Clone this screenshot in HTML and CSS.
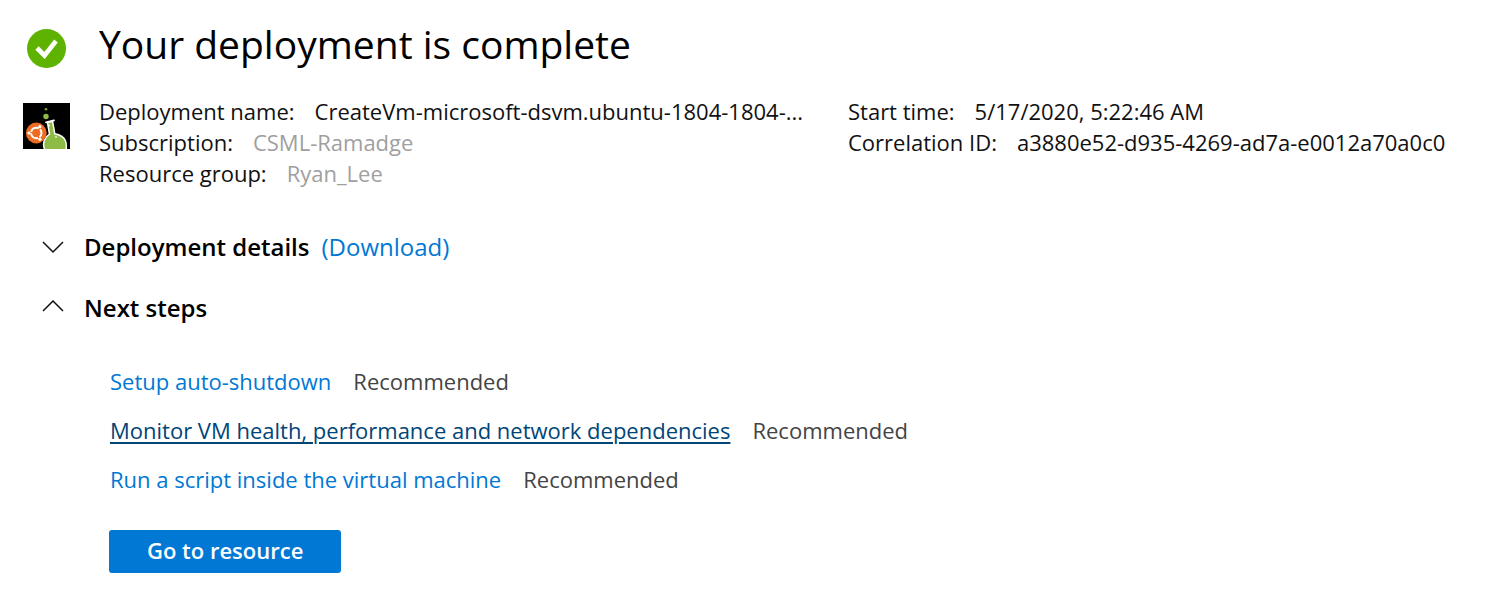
FILE: index.html
```html
<!DOCTYPE html>
<html lang="en">
<head>
<meta charset="utf-8">
<title>Deployment</title>
<link rel="stylesheet" href="styles.css">
</head>
<body>
<main class="page">
  <header class="heading">
    <svg class="status-icon" viewBox="0 0 39 39" aria-hidden="true"><circle cx="19.500" cy="19.500" r="19.500" fill="#5db300"/><path d="M10 19l7.500 7.500L29 12" fill="none" stroke="#fff" stroke-width="4.600"/></svg>
    <h1 class="title">Your deployment is complete</h1>
  </header>
  <section class="summary">
    <svg class="product-icon" viewBox="0 0 47 46" aria-hidden="true">
      <rect width="47" height="46" fill="#000"/>
      <path d="M24.500 19.500l5-1.300 2.300 12.600q8.500 1.500 10.700 7.200 1.400 4 .5 9H22q-2.500-5-.5-10 1.500-3.500 5-6z" fill="#8dbb45" stroke="#fff" stroke-width="1.500"/>
      <path d="M23 19.300l8-2" stroke="#fff" stroke-width="1.800" stroke-linecap="round"/>
      <circle cx="26" cy="22.500" r="1" fill="#fff"/><circle cx="33" cy="34" r="1" fill="#e9f1dc"/>
      <circle cx="13.300" cy="30" r="10.400" fill="#ee6b23"/>
      <circle cx="13.300" cy="30" r="5.200" fill="none" stroke="#fff" stroke-width="2" stroke-dasharray="9.400 1.500" stroke-dashoffset="4.700"/>
      <circle cx="6" cy="30" r="1.600" fill="#fff"/><circle cx="16.900" cy="23.700" r="1.600" fill="#fff"/><circle cx="16.900" cy="36.300" r="1.600" fill="#fff"/>
      <circle cx="23" cy="13.500" r="2.700" fill="#8dbb45"/><circle cx="23" cy="6.300" r="1.300" fill="#7da33d"/>
    </svg>
    <dl class="facts facts-main">
      <div class="fact"><dt>Deployment name:</dt><dd>CreateVm-microsoft-dsvm.ubuntu-1804-1804-...</dd></div>
      <div class="fact"><dt>Subscription:</dt><dd class="muted">CSML-Ramadge</dd></div>
      <div class="fact"><dt>Resource group:</dt><dd class="muted">Ryan_Lee</dd></div>
    </dl>
    <dl class="facts">
      <div class="fact"><dt>Start time:</dt><dd>5/17/2020, 5:22:46 AM</dd></div>
      <div class="fact"><dt>Correlation ID:</dt><dd>a3880e52-d935-4269-ad7a-e0012a70a0c0</dd></div>
    </dl>
  </section>
  <section class="section">
    <button class="toggle" type="button" aria-expanded="false"><svg class="chevron" viewBox="0 0 22 16" aria-hidden="true"><path d="M1 3l10 10L21 3"/></svg>Deployment details</button>
    <a class="link" href="#">(Download)</a>
  </section>
  <section class="section">
    <button class="toggle" type="button" aria-expanded="true"><svg class="chevron" viewBox="0 0 22 16" aria-hidden="true"><path d="M1 11L11 1l10 10"/></svg>Next steps</button>
  </section>
  <ul class="steps">
    <li class="step"><a class="link" href="#">Setup auto-shutdown</a><span>Recommended</span></li>
    <li class="step"><a class="link active" href="#">Monitor VM health, performance and network dependencies</a><span>Recommended</span></li>
    <li class="step"><a class="link" href="#">Run a script inside the virtual machine</a><span>Recommended</span></li>
  </ul>
  <button class="primary" type="button">Go to resource</button>
</main>
</body>
</html>
```
FILE: styles.css
```css
* { box-sizing: border-box; }
body { margin: 0; background: #fff; color: #111; font: 22px/31px "Segoe UI", "Open Sans", "Noto Sans", sans-serif; }
.page { padding: 19px 24px 36px 23px; }
.heading { display: flex; align-items: center; gap: 33px; padding-left: 4px; }
.status-icon { width: 39px; height: 39px; margin-top: 9px; }
.title { margin: 0; color: #000; font-size: 39px; line-height: 50px; font-weight: 400; }
.summary { display: flex; align-items: flex-start; margin-top: 27px; }
.product-icon { flex: none; width: 47px; height: 46px; margin: 7px 29px 0 0; }
.facts { margin: 0; white-space: nowrap; }
.facts-main { flex: 0 0 749px; }
.fact { display: flex; gap: 20px; }
.fact dd { margin: 0; }
.muted { color: #a0a0a0; }
.section { display: flex; align-items: center; gap: 12px; margin-top: 30px; padding-left: 19px; font-size: 24px; }
.summary + .section { margin-top: 42px; }
.toggle { display: flex; align-items: center; gap: 20px; padding: 0; border: 0; background: none; color: #000; font: inherit; font-weight: 600; }
.chevron { width: 22px; height: 16px; fill: none; stroke: #111; stroke-width: 1.5; }
.link { color: #0078d4; text-decoration: none; }
.active { color: #004578; text-decoration: underline; text-decoration-thickness: 2px; text-underline-offset: 3px; }
.steps { display: grid; gap: 18px; margin: 43px 0 0; padding: 0 0 0 87px; list-style: none; }
.step { display: flex; gap: 22px; color: #444; }
.primary { margin: 35px 0 0 86px; padding: 5px 38px 7px; border: 0; border-radius: 3px; background: #0078d4; color: #fff; font: inherit; font-weight: 600; }
```
